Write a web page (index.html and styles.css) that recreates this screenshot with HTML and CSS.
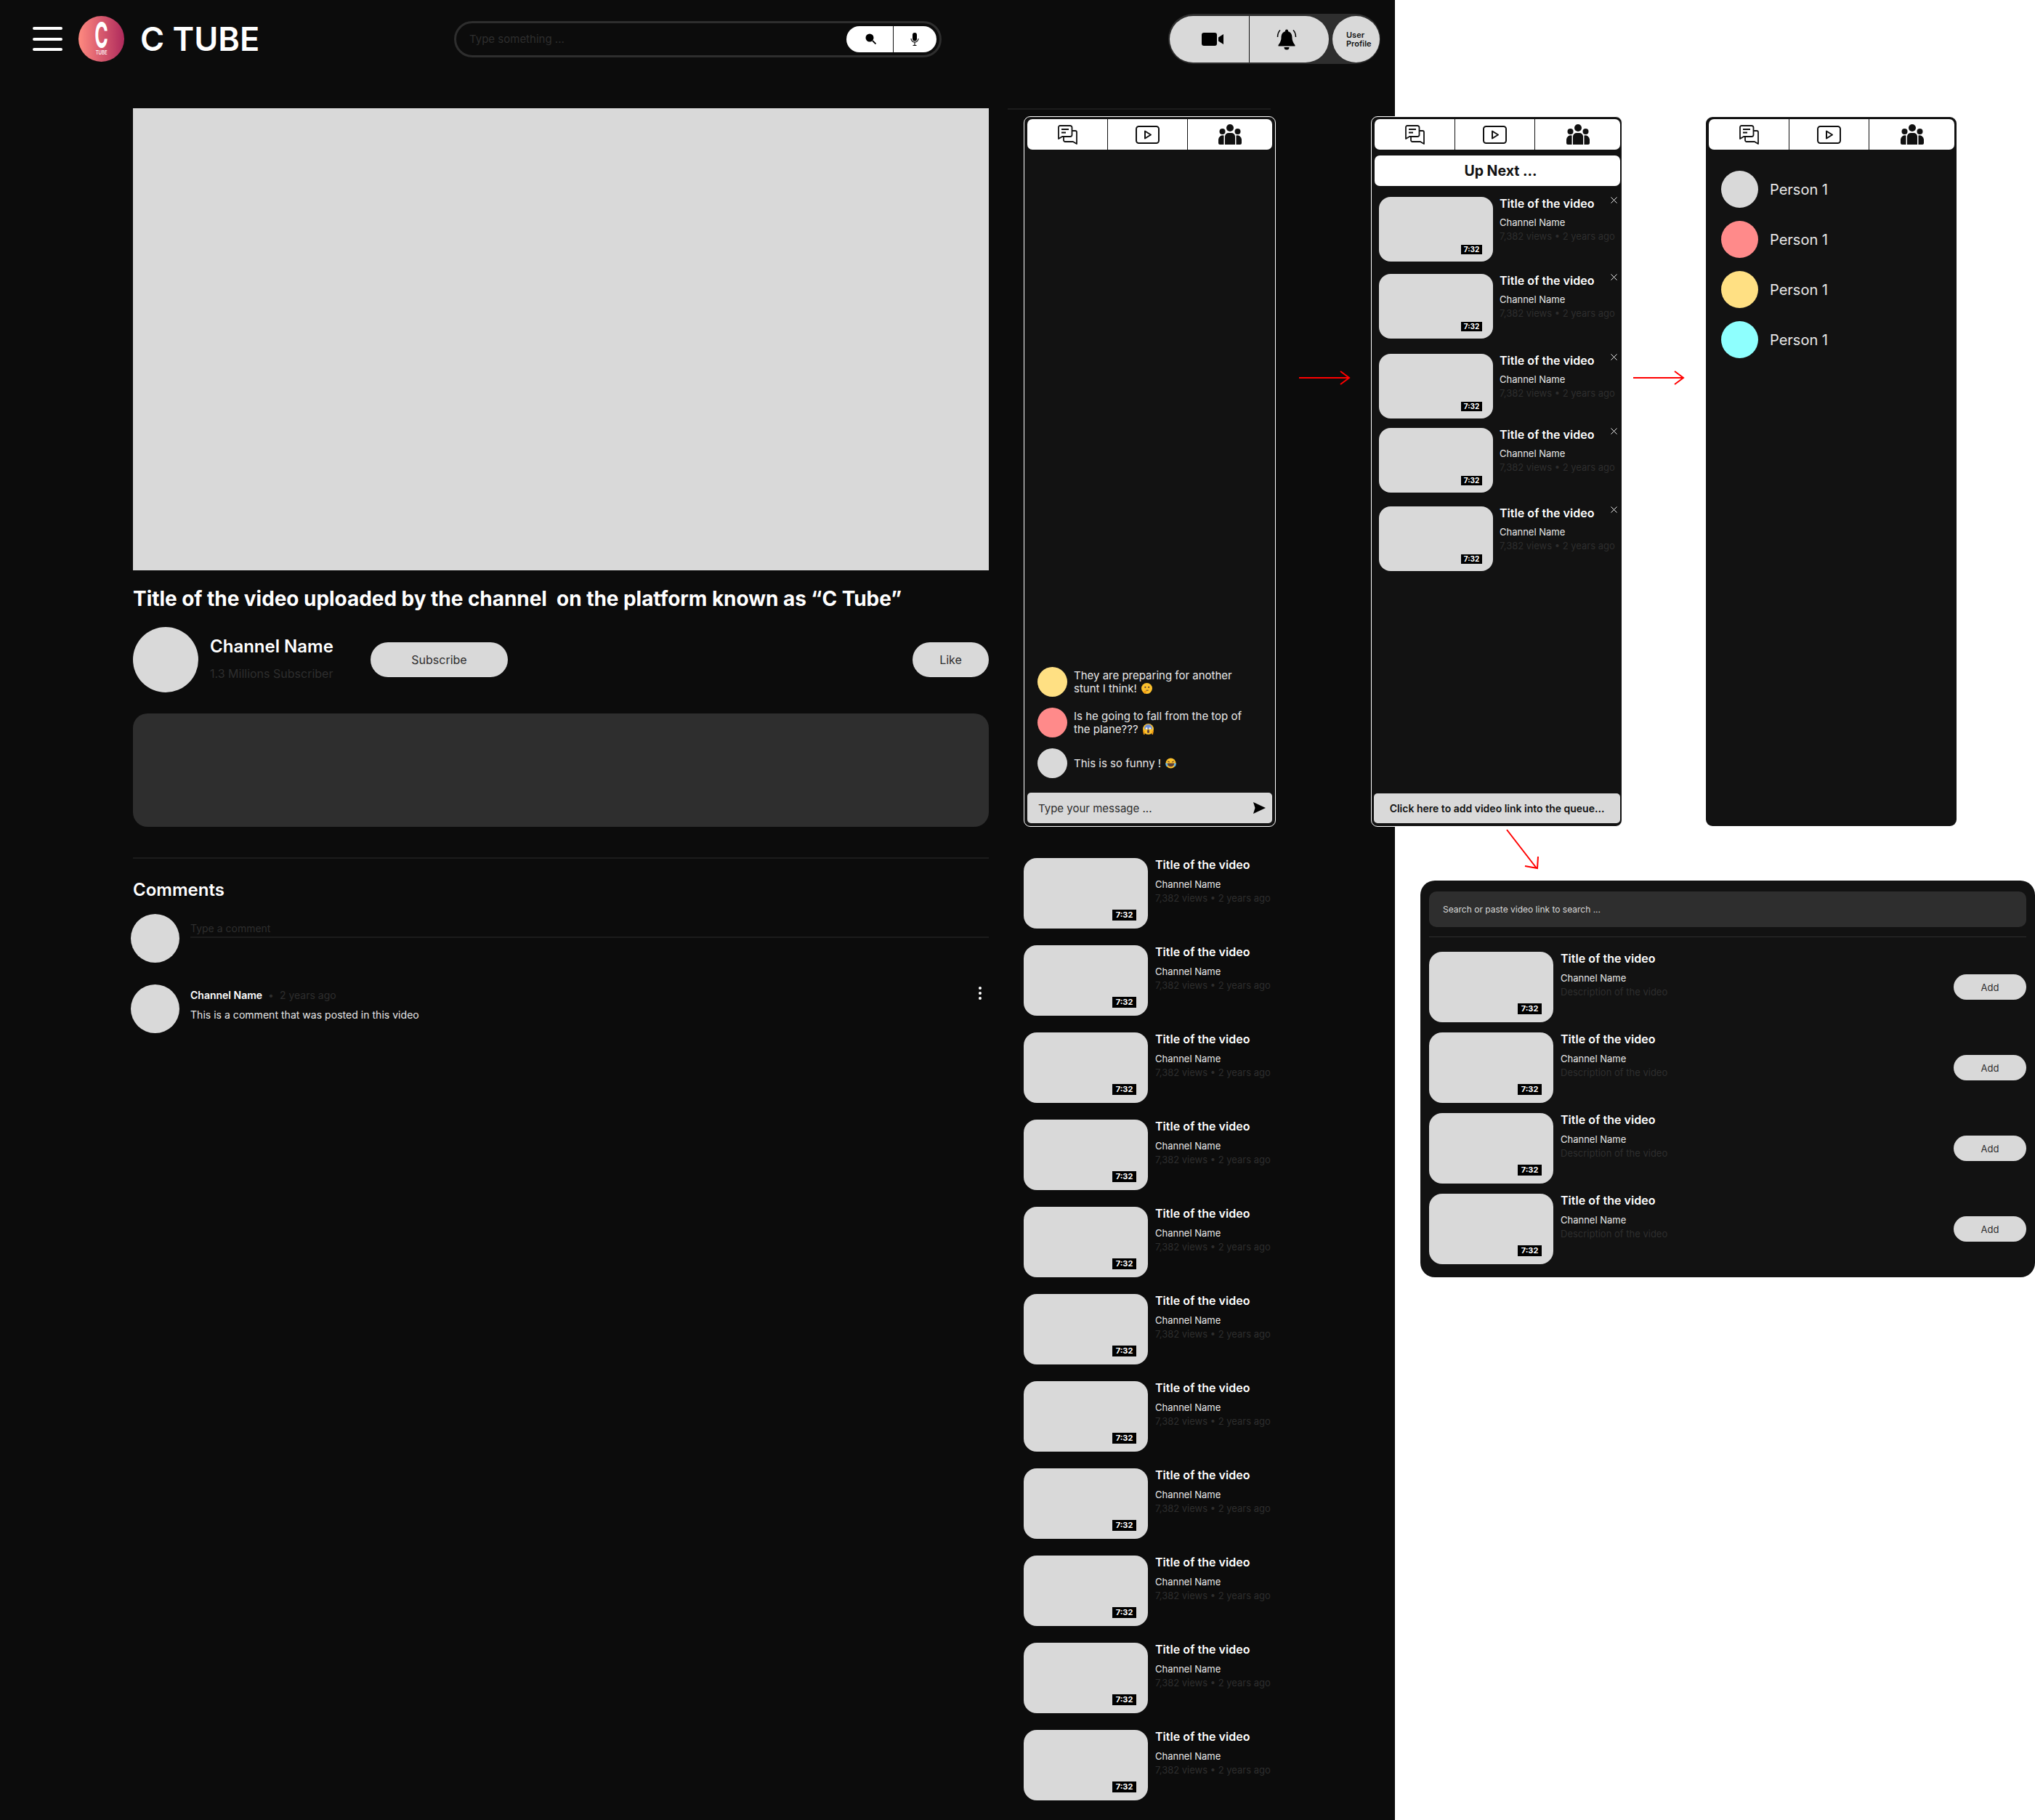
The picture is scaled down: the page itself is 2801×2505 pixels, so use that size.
FILE: index.html
```html
<!DOCTYPE html>
<html>
<head>
    <title>C Tube</title>
    <link rel="stylesheet" href="styles.css">
</head>
<body>
<svg class="defs">
    <symbol id="i-chat" viewBox="0 0 27 27">
        <path d="M3 1h14a2.5 2.5 0 0 1 2.500 2.500v10a2.500 2.500 0 0 1-2.500 2.500H6l-5 3V3a2 2 0 0 1 2-2z" fill="none" stroke="#111" stroke-width="1.800" stroke-linejoin="round"/>
        <path d="M5 6h10M5 10.500h6" stroke="#111" stroke-width="1.800" fill="none"/>
        <path d="M19.500 8H24a2 2 0 0 1 2 2v16l-5-3H10a2 2 0 0 1-2-2v-5" fill="none" stroke="#111" stroke-width="1.800" stroke-linejoin="round"/>
    </symbol>
    <symbol id="i-play" viewBox="0 0 33 25">
        <rect x="1" y="1" width="31" height="23" rx="3.500" fill="none" stroke="#111" stroke-width="2"/>
        <path d="M13 7.500l8 5-8 5z" fill="none" stroke="#111" stroke-width="2" stroke-linejoin="round"/>
    </symbol>
    <symbol id="i-group" viewBox="0 0 32 28">
        <circle cx="16" cy="5" r="5" fill="#111"/>
        <circle cx="5.500" cy="10" r="4" fill="#111"/>
        <circle cx="26.500" cy="10" r="4" fill="#111"/>
        <path d="M9 28V17a5 5 0 0 1 5-5h4a5 5 0 0 1 5 5v11z" fill="#111"/>
        <path d="M7.500 15.500V28H2a2 2 0 0 1-2-2v-5a6 6 0 0 1 7.500-5.500zM24.500 15.500V28H30a2 2 0 0 0 2-2v-5a6 6 0 0 0-7.500-5.500z" fill="#111"/>
    </symbol>
    <symbol id="i-x" viewBox="0 0 9 9">
        <path d="M.5.500l8 8M8.500.500l-8 8" stroke="#eee" stroke-width="1" fill="none"/>
    </symbol>
</svg>

<div class="canvas">
    <!-- Main page frame -->
    <div class="main-frame">
        <header class="topbar">
            <div class="burger"><span></span><span></span><span></span></div>
            <div class="logo">
                <span class="logo-c">C</span>
                <span class="logo-sub">TUBE</span>
            </div>
            <div class="brand">C TUBE</div>
            <div class="searchbar">
                <span class="search-hint">Type something ...</span>
                <div class="search-btns">
                    <span class="search-btn search-btn-find">
                        <svg width="15" height="15" viewBox="0 0 15 15"><circle cx="6" cy="6" r="5.500" fill="#000"/><path d="M10 10l4.500 4.500" stroke="#000" stroke-width="1.800"/></svg>
                    </span>
                    <span class="search-btn">
                        <svg width="12" height="18" viewBox="0 0 12 18"><rect x="3" y="0" width="6" height="11.500" rx="3" fill="#000"/><path d="M1 8a5 5 0 0 0 10 0M6 13v4.500M3.500 17.500h5" stroke="#000" stroke-width="1.100" fill="none"/></svg>
                    </span>
                </div>
            </div>
            <div class="actions">
                <div class="action-pill">
                    <span class="action-btn action-cam">
                        <svg width="30" height="18" viewBox="0 0 30 18"><rect x="0" y="0" width="21" height="18" rx="3" fill="#000"/><path d="M23 6.500L30 2v14l-7-4.500z" fill="#000"/></svg>
                    </span>
                    <span class="action-btn action-bell">
                        <svg width="30" height="30" viewBox="0 0 30 30"><path d="M15 1.500a2 2 0 0 1 2 2v.800c4 1 5.500 4.500 5.500 8.700 0 4.500 2.500 8 4 10v1.500h-23V23c1.500-2 4-5.500 4-10 0-4.200 1.500-7.700 5.500-8.700v-.800a2 2 0 0 1 2-2z" fill="#000"/><path d="M11.500 26h7a3.500 3.500 0 0 1-7 0z" fill="#000"/><path d="M6 2.500C3.500 5 2.500 8 2.500 12M24 2.500c2.500 2.500 3.500 5.500 3.500 9.500" stroke="#000" stroke-width="1.500" fill="none"/></svg>
                    </span>
                </div>
                <div class="profile"><span>User<br>Profile</span></div>
            </div>
        </header>

        <div class="page">
            <main class="watch">
                <div class="player"></div>
                <h1 class="video-title">Title of the video uploaded by the channel&nbsp; on the platform known as “C Tube”</h1>
                <div class="channel-row">
                    <div class="avatar avatar-big"></div>
                    <div class="channel-info">
                        <div class="channel-name">Channel Name</div>
                        <div class="channel-subs">1.3 Millions Subscriber</div>
                    </div>
                    <button class="pill-btn subscribe">Subscribe</button>
                    <button class="pill-btn like">Like</button>
                </div>
                <div class="description"></div>
                <hr class="rule">
                <h2 class="comments-title">Comments</h2>
                <div class="comment-row">
                    <div class="avatar avatar-mid"></div>
                    <div class="comment-input">Type a comment</div>
                </div>
                <div class="comment-row comment-posted">
                    <div class="avatar avatar-mid"></div>
                    <div class="comment-body">
                        <div class="comment-head"><b>Channel Name</b><span class="faint dot">•</span><span class="faint">2 years ago</span></div>
                        <div class="comment-text">This is a comment that was posted in this video</div>
                    </div>
                    <svg class="comment-more" width="4" height="18" viewBox="0 0 4 18"><circle cx="2" cy="2" r="2" fill="#fff"/><circle cx="2" cy="9" r="2" fill="#fff"/><circle cx="2" cy="16" r="2" fill="#fff"/></svg>
                </div>
            </main>

            <aside class="sidebar">
                <div class="side-line"></div>
                <div class="panel chat-panel">
                    <div class="tabs">
                        <span class="tab"><svg class="ic-chat"><use href="#i-chat"/></svg></span>
                        <span class="tab"><svg class="ic-play"><use href="#i-play"/></svg></span>
                        <span class="tab"><svg class="ic-group"><use href="#i-group"/></svg></span>
                    </div>
                    <div class="messages">
                        <div class="msg">
                            <div class="avatar avatar-msg yellow"></div>
                            <div>They are preparing for another<br>stunt I think!
                                <svg class="emoji" viewBox="0 0 14 14"><circle cx="7" cy="7" r="7" fill="#fbc02d"/><circle cx="5" cy="5.500" r="1" fill="#5d4037"/><circle cx="9.500" cy="5.500" r="1" fill="#5d4037"/><path d="M6 9.500h3" stroke="#5d4037" stroke-width="1"/><path d="M2 11l4-1.500 1 2-3 2.500z" fill="#f39c12"/></svg>
                            </div>
                        </div>
                        <div class="msg">
                            <div class="avatar avatar-msg pink"></div>
                            <div>Is he going to fall from the top of<br>the plane???
                                <svg class="emoji" viewBox="0 0 14 14"><circle cx="7" cy="7" r="7" fill="#fbc02d"/><path d="M2 6a5 5 0 0 1 10 0v1H2z" fill="#6d8fd6"/><circle cx="4.800" cy="6" r="1.200" fill="#fff"/><circle cx="9.200" cy="6" r="1.200" fill="#fff"/><ellipse cx="7" cy="10" rx="1.500" ry="2.300" fill="#5d4037"/><path d="M0 9h2.500v5H1zM14 9h-2.500v5H13z" fill="#f39c12"/></svg>
                            </div>
                        </div>
                        <div class="msg">
                            <div class="avatar avatar-msg"></div>
                            <div>This is so funny !
                                <svg class="emoji" viewBox="0 0 14 14"><circle cx="7" cy="7" r="6.500" fill="#fbc02d"/><path d="M2.500 7h9a4.500 4.500 0 0 1-9 0z" fill="#5d4037"/><path d="M3 4.500l2.500 1M11 4.500l-2.500 1" stroke="#5d4037" stroke-width="1" fill="none"/><path d="M0 7h2.500l.5 4H1zM14 7h-2.500l-.5 4H13z" fill="#5cb8f0"/></svg>
                            </div>
                        </div>
                    </div>
                    <div class="msg-input">
                        <span>Type your message ...</span>
                        <svg width="17" height="16" viewBox="0 0 17 16"><path d="M0 0l17 8-17 8 2.500-8z" fill="#000"/></svg>
                    </div>
                </div>

                <div class="side-list">
                    <div class="vid"><div class="thumb"><span class="duration">7:32</span></div><div class="meta"><div class="vid-title">Title of the video</div><div class="vid-channel">Channel Name</div><div class="vid-info">7,382 views • 2 years ago</div></div></div>
                    <div class="vid"><div class="thumb"><span class="duration">7:32</span></div><div class="meta"><div class="vid-title">Title of the video</div><div class="vid-channel">Channel Name</div><div class="vid-info">7,382 views • 2 years ago</div></div></div>
                    <div class="vid"><div class="thumb"><span class="duration">7:32</span></div><div class="meta"><div class="vid-title">Title of the video</div><div class="vid-channel">Channel Name</div><div class="vid-info">7,382 views • 2 years ago</div></div></div>
                    <div class="vid"><div class="thumb"><span class="duration">7:32</span></div><div class="meta"><div class="vid-title">Title of the video</div><div class="vid-channel">Channel Name</div><div class="vid-info">7,382 views • 2 years ago</div></div></div>
                    <div class="vid"><div class="thumb"><span class="duration">7:32</span></div><div class="meta"><div class="vid-title">Title of the video</div><div class="vid-channel">Channel Name</div><div class="vid-info">7,382 views • 2 years ago</div></div></div>
                    <div class="vid"><div class="thumb"><span class="duration">7:32</span></div><div class="meta"><div class="vid-title">Title of the video</div><div class="vid-channel">Channel Name</div><div class="vid-info">7,382 views • 2 years ago</div></div></div>
                    <div class="vid"><div class="thumb"><span class="duration">7:32</span></div><div class="meta"><div class="vid-title">Title of the video</div><div class="vid-channel">Channel Name</div><div class="vid-info">7,382 views • 2 years ago</div></div></div>
                    <div class="vid"><div class="thumb"><span class="duration">7:32</span></div><div class="meta"><div class="vid-title">Title of the video</div><div class="vid-channel">Channel Name</div><div class="vid-info">7,382 views • 2 years ago</div></div></div>
                    <div class="vid"><div class="thumb"><span class="duration">7:32</span></div><div class="meta"><div class="vid-title">Title of the video</div><div class="vid-channel">Channel Name</div><div class="vid-info">7,382 views • 2 years ago</div></div></div>
                    <div class="vid"><div class="thumb"><span class="duration">7:32</span></div><div class="meta"><div class="vid-title">Title of the video</div><div class="vid-channel">Channel Name</div><div class="vid-info">7,382 views • 2 years ago</div></div></div>
                    <div class="vid"><div class="thumb"><span class="duration">7:32</span></div><div class="meta"><div class="vid-title">Title of the video</div><div class="vid-channel">Channel Name</div><div class="vid-info">7,382 views • 2 years ago</div></div></div>
                </div>
            </aside>
        </div>
    </div>

    <!-- Arrows between the frames -->
    <svg class="flow-arrows" width="2801" height="2505" viewBox="0 0 2801 2505">
        <path d="M1788 520h68M1845 511l12 9-12 9" stroke="#f00" stroke-width="2" fill="none"/>
        <path d="M2248 520h68M2305 511l12 9-12 9" stroke="#f00" stroke-width="2" fill="none"/>
        <path d="M2074 1142l41 53M2099 1192l17 3 1-16" stroke="#f00" stroke-width="2" fill="none"/>
    </svg>

    <!-- Up next frame -->
    <div class="panel queue-panel">
        <div class="tabs">
            <span class="tab"><svg class="ic-chat"><use href="#i-chat"/></svg></span>
            <span class="tab"><svg class="ic-play"><use href="#i-play"/></svg></span>
            <span class="tab"><svg class="ic-group"><use href="#i-group"/></svg></span>
        </div>
        <div class="up-next">Up Next ...</div>
        <div class="queue">
            <div class="vid vid-small"><div class="thumb"><span class="duration">7:32</span></div><div class="meta"><div class="vid-title">Title of the video</div><div class="vid-channel">Channel Name</div><div class="vid-info">7,382 views • 2 years ago</div></div><svg class="close"><use href="#i-x"/></svg></div>
            <div class="vid vid-small"><div class="thumb"><span class="duration">7:32</span></div><div class="meta"><div class="vid-title">Title of the video</div><div class="vid-channel">Channel Name</div><div class="vid-info">7,382 views • 2 years ago</div></div><svg class="close"><use href="#i-x"/></svg></div>
            <div class="vid vid-small"><div class="thumb"><span class="duration">7:32</span></div><div class="meta"><div class="vid-title">Title of the video</div><div class="vid-channel">Channel Name</div><div class="vid-info">7,382 views • 2 years ago</div></div><svg class="close"><use href="#i-x"/></svg></div>
            <div class="vid vid-small"><div class="thumb"><span class="duration">7:32</span></div><div class="meta"><div class="vid-title">Title of the video</div><div class="vid-channel">Channel Name</div><div class="vid-info">7,382 views • 2 years ago</div></div><svg class="close"><use href="#i-x"/></svg></div>
            <div class="vid vid-small"><div class="thumb"><span class="duration">7:32</span></div><div class="meta"><div class="vid-title">Title of the video</div><div class="vid-channel">Channel Name</div><div class="vid-info">7,382 views • 2 years ago</div></div><svg class="close"><use href="#i-x"/></svg></div>
        </div>
        <button class="add-link">Click here to add video link into the queue...</button>
    </div>

    <!-- People frame -->
    <div class="panel people-panel">
        <div class="tabs">
            <span class="tab"><svg class="ic-chat"><use href="#i-chat"/></svg></span>
            <span class="tab"><svg class="ic-play"><use href="#i-play"/></svg></span>
            <span class="tab"><svg class="ic-group"><use href="#i-group"/></svg></span>
        </div>
        <div class="people">
            <div class="person"><div class="avatar avatar-person"></div>Person 1</div>
            <div class="person"><div class="avatar avatar-person pink"></div>Person 1</div>
            <div class="person"><div class="avatar avatar-person yellow"></div>Person 1</div>
            <div class="person"><div class="avatar avatar-person cyan"></div>Person 1</div>
        </div>
    </div>

    <!-- Add video frame -->
    <div class="add-panel">
        <div class="add-search">Search or paste video link to search ...</div>
        <hr class="add-rule">
        <div class="add-list">
            <div class="vid vid-add"><div class="thumb"><span class="duration">7:32</span></div><div class="meta"><div class="vid-title">Title of the video</div><div class="vid-channel">Channel Name</div><div class="vid-info">Description of the video</div></div><button class="pill-btn add-btn">Add</button></div>
            <div class="vid vid-add"><div class="thumb"><span class="duration">7:32</span></div><div class="meta"><div class="vid-title">Title of the video</div><div class="vid-channel">Channel Name</div><div class="vid-info">Description of the video</div></div><button class="pill-btn add-btn">Add</button></div>
            <div class="vid vid-add"><div class="thumb"><span class="duration">7:32</span></div><div class="meta"><div class="vid-title">Title of the video</div><div class="vid-channel">Channel Name</div><div class="vid-info">Description of the video</div></div><button class="pill-btn add-btn">Add</button></div>
            <div class="vid vid-add"><div class="thumb"><span class="duration">7:32</span></div><div class="meta"><div class="vid-title">Title of the video</div><div class="vid-channel">Channel Name</div><div class="vid-info">Description of the video</div></div><button class="pill-btn add-btn">Add</button></div>
        </div>
    </div>
</div>
</body>
</html>
```
FILE: styles.css
```css
* { box-sizing: border-box; }
body { margin: 0; background: #fff; font-family: Inter, "Noto Sans", sans-serif; color: #fff; }
button { font-family: inherit; border: none; padding: 0; }
.defs { display: none; }

/* Free canvas: the frames sit where the designer dropped them */
.canvas { position: relative; width: 2801px; height: 2505px; overflow: hidden; }
.main-frame { width: 1920px; height: 2505px; background: #0c0c0c; overflow: hidden; }
.flow-arrows { position: absolute; left: 0; top: 0; pointer-events: none; z-index: 2; }

/* Top bar */
.topbar { display: flex; align-items: center; height: 107px; padding-left: 45px; }
.burger { display: flex; flex-direction: column; gap: 10.5px; width: 41px; }
.burger span { height: 4px; border-radius: 2px; background: #fff; }
.logo {
    flex: none;
    width: 63px;
    height: 63px;
    margin-left: 22px;
    border-radius: 50%;
    background: linear-gradient(90deg, #ff8a80, #af2a5c);
    display: flex;
    flex-direction: column;
    align-items: center;
}
.logo-c { font-size: 50px; line-height: 37px; height: 37px; margin-top: 8px; font-weight: 700; transform: scaleX(.5); }
.logo-sub { font-size: 8px; line-height: 9px; margin-top: 1px; font-weight: 500; transform: scaleX(.75); }
.brand { margin-left: 22px; width: 160px; font-size: 45px; font-weight: 600; line-height: 50px; white-space: nowrap; }
.searchbar {
    display: flex;
    align-items: center;
    justify-content: space-between;
    width: 671px;
    height: 50px;
    margin-left: 272px;
    padding: 0 4px 0 18px;
    border: 3px solid #2e2e2e;
    border-radius: 25px;
}
.search-hint { font-size: 15px; color: #2e2e2e; }
.search-btns { display: flex; width: 124px; height: 36px; border-radius: 18px; background: #fff; overflow: hidden; }
.search-btn { flex: 1; display: flex; align-items: center; justify-content: center; }
.search-btn + .search-btn { border-left: 1px solid #111; }
.search-btn-find { padding-left: 4px; }
.actions {
    display: flex;
    align-items: center;
    gap: 5px;
    width: 292px;
    height: 69px;
    margin-left: 312px;
    padding: 0 1px 0 2px;
    border-radius: 35px;
    background: #2e2e2e;
}
.action-pill { display: flex; width: 219px; height: 64px; border-radius: 32px; background: #d9d9d9; overflow: hidden; }
.action-btn { flex: 1; display: flex; align-items: center; justify-content: center; }
.action-btn + .action-btn { border-left: 1px solid #111; }
.action-cam { padding-left: 8px; }
.action-bell { padding-right: 8px; }
.profile {
    flex: none;
    width: 65px;
    height: 64px;
    padding-left: 19px;
    border-radius: 50%;
    background: #d9d9d9;
    color: #111;
    font-size: 11px;
    font-weight: 600;
    line-height: 12px;
    display: flex;
    align-items: center;
}

/* Page body */
.page { display: flex; padding: 42px 0 0 183px; }
.watch { width: 1178px; }
.player { height: 636px; background: #d9d9d9; }
.video-title { margin: 22px 0 0; font-size: 28px; font-weight: 700; line-height: 34px; white-space: nowrap; letter-spacing: -.05px; }
.avatar { flex: none; border-radius: 50%; background: #d9d9d9; }
.avatar-big { width: 90px; height: 90px; }
.avatar-mid { width: 67px; height: 67px; margin-left: -3px; }
.channel-row { display: flex; align-items: center; margin-top: 22px; }
.channel-info { width: 221px; margin-left: 16px; padding-bottom: 3px; }
.channel-name { font-size: 24px; font-weight: 600; line-height: 28px; white-space: nowrap; }
.channel-subs { margin-top: 13px; font-size: 16px; line-height: 20px; color: #2e2e2e; white-space: nowrap; }
.pill-btn { background: #d9d9d9; color: #2e2e2e; font-size: 16px; border-radius: 24px; height: 48px; }
.subscribe { width: 189px; }
.like { width: 105px; margin-left: auto; }
.description { height: 156px; margin-top: 29px; border-radius: 20px; background: #2e2e2e; }
.rule { height: 2px; margin: 42px 0 0; border: none; background: #1c1c1c; }
.comments-title { margin: 28px 0 0; font-size: 24px; font-weight: 600; line-height: 30px; }
.comment-row { display: flex; margin-top: 18px; }
.comment-input {
    flex: 1;
    height: 33px;
    margin-left: 15px;
    padding-top: 11px;
    font-size: 14px;
    line-height: 18px;
    color: #2e2e2e;
    border-bottom: 2px solid #1c1c1c;
}
.comment-posted { margin-top: 30px; }
.comment-body { margin-left: 15px; padding-top: 6px; font-size: 14px; line-height: 18px; }
.comment-head b { font-weight: 600; }
.faint { color: #2e2e2e; }
.dot { margin: 0 8px; }
.comment-text { margin-top: 9px; color: #e8e8e8; letter-spacing: .03px; }
.comment-more { margin: 3px 10px 0 auto; }

/* Sidebar */
.sidebar { width: 370px; margin-left: 26px; }
.side-line { width: 362px; height: 2px; background: #1c1c1c; }
.side-list { margin: 43px 0 0 22px; }
.side-list .vid + .vid { margin-top: 23px; }

/* Panels with the three tabs */
.panel { display: flex; flex-direction: column; background: #121212; border: 1px solid #fff; border-radius: 9px; padding: 3px 4px 4px; }
.chat-panel { width: 347px; height: 978px; margin: 9px 0 0 22px; }
.queue-panel { position: absolute; left: 1887px; top: 160px; width: 346px; height: 978px; padding-right: 2px; }
.people-panel { position: absolute; left: 2348px; top: 161px; width: 345px; height: 976px; border: none; padding: 3px 3px 0 4px; }
.tabs { display: flex; flex: none; height: 42px; border-radius: 7px; background: #fff; }
.tab { flex: none; width: 110px; display: flex; align-items: center; justify-content: center; }
.tab:last-child { flex: 1; }
.tab + .tab { border-left: 1px solid #111; }
.ic-chat { width: 27px; height: 27px; }
.ic-play { width: 33px; height: 25px; }
.ic-group { width: 32px; height: 28px; }

/* Live chat */
.messages { flex: 1; display: flex; flex-direction: column; justify-content: flex-end; gap: 15px; padding: 0 0 20px 14px; font-size: 15px; line-height: 18px; color: #e8e8e8; }
.msg { display: flex; align-items: center; gap: 9px; white-space: nowrap; }
.avatar-msg { width: 41px; height: 41px; }
.emoji { width: 15px; height: 15px; vertical-align: -2px; margin-left: 2px; }
.yellow { background: #ffe083; }
.pink { background: #ff8a8a; }
.cyan { background: #8efffe; }
.msg-input {
    display: flex;
    align-items: center;
    justify-content: space-between;
    flex: none;
    height: 42px;
    padding: 0 9px 0 15px;
    border-radius: 5px;
    background: #d9d9d9;
    color: #2e2e2e;
    font-size: 15px;
}

/* Video rows */
.vid { display: flex; position: relative; }
.thumb { position: relative; flex: none; width: 171px; height: 97px; border-radius: 18px; background: #d9d9d9; }
.duration {
    position: absolute;
    right: 16px;
    bottom: 11px;
    width: 33px;
    height: 15px;
    background: #000;
    color: #fff;
    font-size: 11px;
    font-weight: 700;
    line-height: 15px;
    text-align: center;
}
.meta { margin-left: 10px; white-space: nowrap; }
.vid-title { font-size: 16px; font-weight: 600; line-height: 18px; letter-spacing: .04px; }
.vid-channel { margin-top: 9px; font-size: 13px; line-height: 18px; color: #e8e8e8; }
.vid-info { margin-top: 1px; font-size: 13px; line-height: 18px; color: #2e2e2e; }

/* Up next */
.up-next { flex: none; height: 42px; margin-top: 8px; border-radius: 7px; background: #fff; color: #111; font-size: 19.500px; font-weight: 700; line-height: 42px; text-align: center; padding-left: 9px; }
.queue { flex: 1; padding: 15px 0 0 6px; }
.vid-small .thumb { width: 157px; height: 89px; border-radius: 16px; }
.vid-small .meta { margin-left: 9px; }
.vid-small .vid-channel { margin-top: 8px; }
.vid-small .duration { right: 15px; bottom: 10px; width: 29px; height: 13px; font-size: 10px; line-height: 13px; }
.vid-small:nth-child(2) { margin-top: 17px; }
.vid-small:nth-child(3) { margin-top: 21px; }
.vid-small:nth-child(4) { margin-top: 13px; }
.vid-small:nth-child(5) { margin-top: 19px; }
.close { position: absolute; right: 4px; top: 0; width: 9px; height: 9px; }
.add-link { flex: none; height: 41px; margin-left: -1px; border-radius: 5px; background: #d9d9d9; color: #111; font-size: 14px; font-weight: 600; }

/* People */
.people { display: flex; flex-direction: column; gap: 18px; padding: 29px 0 0 17px; }
.person { display: flex; align-items: center; gap: 16px; font-size: 20px; color: #e8e8e8; }
.avatar-person { width: 51px; height: 51px; }

/* Add video */
.add-panel { position: absolute; left: 1955px; top: 1212px; width: 846px; height: 546px; padding: 15px 12px 0; border-radius: 20px; background: #121212; }
.add-search { height: 49px; padding-left: 19px; border-radius: 10px; background: #2e2e2e; color: #d9d9d9; font-size: 12px; line-height: 49px; }
.add-rule { height: 1px; margin: 13px 0 0; border: none; background: #2e2e2e; }
.add-list { display: flex; flex-direction: column; gap: 14px; margin-top: 20px; }
.vid-add { align-items: flex-start; }
.vid-add .meta { margin-left: 10px; }
.add-btn { width: 100px; height: 35px; margin: 31px 0 0 auto; font-size: 13px; border-radius: 18px; }
```
